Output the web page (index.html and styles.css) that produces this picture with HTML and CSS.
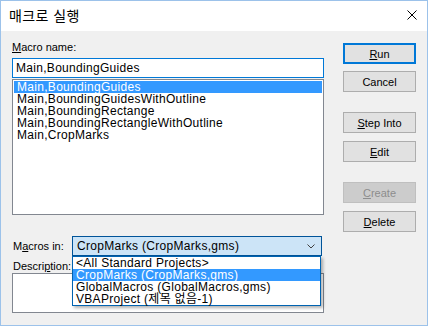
FILE: index.html
```html
<!DOCTYPE html>
<html lang="ko">

<head>
  <meta charset="UTF-8">
  <meta name="viewport" content="width=device-width, initial-scale=1.0">
  <title>매크로 실행</title>
  <link rel="stylesheet" href="styles.css">
</head>

<body>
  <div class="window">
    <div class="titlebar">
      <span class="title">매크로 실행</span>
      <svg class="close" width="10" height="10" viewBox="0 0 10 10">
        <path d="M0.5 0.5 L9.5 9.5 M9.5 0.5 L0.5 9.5" stroke="#000" stroke-width="1" fill="none" />
      </svg>
    </div>

    <div class="dialog">
      <div class="main">
        <div class="label name-label"><u>M</u>acro name:</div>
        <div class="name-input">Main,BoundingGuides</div>

        <ul class="macro-list">
          <li class="selected">Main,BoundingGuides</li>
          <li>Main,BoundingGuidesWithOutline</li>
          <li>Main,BoundingRectange</li>
          <li>Main,BoundingRectangleWithOutline</li>
          <li>Main,CropMarks</li>
        </ul>

        <div class="macros-in">
          <div class="label macros-label">M<u>a</u>cros in:</div>
          <div class="combo">
            <span class="combo-text">CropMarks (CropMarks,gms)</span>
            <svg class="chevron" width="8" height="5" viewBox="0 0 8 5">
              <path d="M0.5 0.5 L4 4 L7.5 0.5" stroke="#404040" stroke-width="1" fill="none" />
            </svg>
            <!-- open dropdown of the combo -->
            <ul class="dropdown">
              <li>&lt;All Standard Projects&gt;</li>
              <li class="selected">CropMarks (CropMarks,gms)</li>
              <li>GlobalMacros (GlobalMacros,gms)</li>
              <li>VBAProject (제목 없음-1)</li>
            </ul>
          </div>
        </div>

        <div class="label desc-label">Descri<u>p</u>tion:</div>
        <div class="desc-box"></div>
      </div>

      <div class="buttons">
        <button type="button" class="btn default run"><u>R</u>un</button>
        <button type="button" class="btn cancel">Cancel</button>
        <button type="button" class="btn step">
          <u>S</u>tep Into</button>
        <button type="button" class="btn edit"><u>E</u>dit</button>
        <button type="button" class="btn create" disabled><u>C</u>reate</button>
        <button type="button" class="btn delete"><u>D</u>elete</button>
      </div>
    </div>
  </div>
</body>

</html>
```

FILE: styles.css
```css
body {
  margin: 0;
  font-family: 'Liberation Sans', 'Noto Sans CJK KR', sans-serif;
  color: #000;
  background-color: #fff;
}

.window {
  width: 428px;
  height: 326px;
  box-sizing: border-box;
  border: 1px solid #9cc2ea;
  display: flex;
  flex-direction: column;
  background-color: #f0f0f0;
}

.titlebar {
  height: 30px;
  flex-shrink: 0;
  background-color: #fff;
  display: flex;
  align-items: center;
  justify-content: space-between;
  padding: 0 10px 2px 8px;
  box-sizing: border-box;
}

.title {
  font-family: 'Noto Sans CJK KR', sans-serif;
  font-size: 14px;
  letter-spacing: 0.4px;
  color: #000;
}

.close {
  display: block;
}

.dialog {
  flex: 1;
  display: flex;
  gap: 19px;
  padding: 10px 11px 0 11px;
}

.main {
  width: 312px;
  display: flex;
  flex-direction: column;
}

.label {
  font-size: 11px;
  line-height: 13px;
}

.name-input {
  margin-top: 4px;
  height: 20px;
  box-sizing: border-box;
  border: 1px solid #0078d7;
  background-color: #fff;
  padding-left: 3px;
  font-size: 12px;
  line-height: 18px;
  letter-spacing: 0.3px;
}

.macro-list {
  margin: 1px 0 0 0;
  height: 136px;
  box-sizing: border-box;
  border: 1px solid #828790;
  background-color: #fff;
  padding: 1px;
  list-style: none;
}

.macro-list li,
.dropdown li {
  font-size: 12px;
  line-height: 12px;
  height: 12px;
  padding: 0 0 0 3px;
  box-sizing: border-box;
  letter-spacing: 0.3px;
  white-space: nowrap;
}

.macro-list li.selected,
.dropdown li.selected {
  background-color: #3399ff;
  color: #fff;
}

.macros-in {
  margin-top: 21px;
  display: flex;
  align-items: center;
}

.macros-label {
  width: 60px;
  padding-left: 1px;
  box-sizing: border-box;
}

.combo {
  position: relative;
  width: 250px;
  height: 20px;
  box-sizing: border-box;
  border: 1px solid #005499;
  background-color: #cce4f7;
  display: flex;
  align-items: center;
  justify-content: space-between;
  padding: 0 6px 0 4px;
}

.combo-text {
  font-size: 12px;
  letter-spacing: 0.3px;
}

.dropdown {
  position: absolute;
  top: 19px;
  left: -1px;
  width: 249px;
  box-sizing: border-box;
  margin: 0;
  padding: 0;
  list-style: none;
  background-color: #fff;
  border: 1px solid #0063b1;
  box-shadow: 2px 2px 3px rgba(0, 0, 0, 0.3);
  z-index: 2;
}

.dropdown li {
  padding-left: 3px;
}

.desc-label {
  margin-top: 4px;
  padding-left: 1px;
}

.desc-box {
  height: 40px;
  box-sizing: border-box;
  border: 1px solid #828790;
  background-color: #fff;
}

.buttons {
  width: 73px;
  display: flex;
  flex-direction: column;
}

.btn {
  height: 21px;
  width: 73px;
  box-sizing: border-box;
  border: 1px solid #adadad;
  background-color: #e1e1e1;
  font-family: 'Liberation Sans', sans-serif;
  font-size: 11px;
  color: #000;
  padding: 0;
}

.btn.default {
  border: 2px solid #0078d7;
}

.btn:disabled {
  background-color: #cccccc;
  border-color: #bfbfbf;
  color: #8d8d8d;
}

.run {
  margin-top: 2px;
}

.cancel {
  margin-top: 7px;
}

.step {
  margin-top: 20px;
}

.edit {
  margin-top: 8px;
}

.create {
  margin-top: 20px;
}

.delete {
  margin-top: 8px;
}
```
